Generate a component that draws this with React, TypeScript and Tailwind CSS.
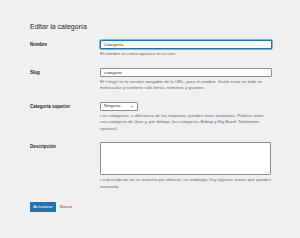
// Editar la categoría — formulario de edición de categoría (WP admin, escala reducida)

function Row({ label, children }: { label: string; children: React.ReactNode }) {
  return (
    <div className="flex py-[5px]">
      <div className="w-[70px] shrink-0 h-[9px] leading-[9px] text-[4.5px] font-semibold text-[#1d2327]">
        {label}
      </div>
      <div className="w-[172px]">{children}</div>
    </div>
  );
}

function Help({ children }: { children: React.ReactNode }) {
  return <p className="mt-[2px] text-[4.4px] leading-[6.5px] text-[#646970]">{children}</p>;
}

export default function App() {
  return (
    <div
      className="min-h-[238px] w-[300px] bg-[#f0f0f1] pl-[30px] pt-[22px]"
      style={{ fontFamily: '"Liberation Sans", Arial, sans-serif' }}
    >
      <h1 className="text-[7px] leading-[9px] text-[#1d2327]">Editar la categoría</h1>

      <div className="mt-[4px]">
        <Row label="Nombre">
          <div className="h-[9px] w-[172px] rounded-[1px] border-[0.6px] border-[#2271b1] bg-white pl-[3px] text-[4.4px] leading-[8px] text-[#2c3338] shadow-[0_0_0_0.5px_#2271b1]">
            Categoría
          </div>
          <Help>El nombre es como aparece en tu sitio.</Help>
        </Row>

        <Row label="Slug">
          <div className="h-[9px] w-[172px] rounded-[1px] border-[0.6px] border-[#8c8f94] bg-white pl-[3px] text-[4.4px] leading-[8px] text-[#2c3338]">
            categoria
          </div>
          <Help>
            El «slug» es la versión amigable de la URL, para el nombre. Suele estar en todo en minúsculas y contiene
            solo letras, números y guiones.
          </Help>
        </Row>

        <Row label="Categoría superior">
          <div className="flex h-[9px] w-[38px] items-center justify-between rounded-[1px] border-[0.6px] border-[#8c8f94] bg-white pl-[3px] pr-[3px] text-[4.4px] text-[#2c3338]">
            <span>Ninguna</span>
            <svg width="4" height="3" viewBox="0 0 8 5" fill="none">
              <path d="M1 1l3 3 3-3" stroke="#50575e" strokeWidth="1" />
            </svg>
          </div>
          <Help>
            Las categorías, a diferencia de las etiquetas, pueden tener jerarquías. Podrías tener una categoría de Jazz y,
            por debajo, las categorías Bebop y Big Band. Totalmente opcional.
          </Help>
        </Row>

        <Row label="Descripción">
          <div className="relative h-[33px] w-[171px] rounded-[1px] border-[0.6px] border-[#8c8f94] bg-white">
            <svg className="absolute bottom-[1px] right-[1px]" width="3" height="3" viewBox="0 0 6 6">
              <path d="M6 1L1 6M6 4L4 6" stroke="#a7aaad" strokeWidth="0.8" />
            </svg>
          </div>
          <Help>La descripción no se muestra por defecto; sin embargo, hay algunos temas que pueden mostrarla.</Help>
        </Row>
      </div>

      <div className="mt-[7px] flex items-center gap-[4px]">
        <button className="h-[10px] w-[26px] rounded-[1px] bg-[#2271b1] text-[4.4px] leading-[10px] text-white">
          Actualizar
        </button>
        <span className="text-[4.4px] text-[#b32d2e]">Borrar</span>
      </div>
    </div>
  );
}
